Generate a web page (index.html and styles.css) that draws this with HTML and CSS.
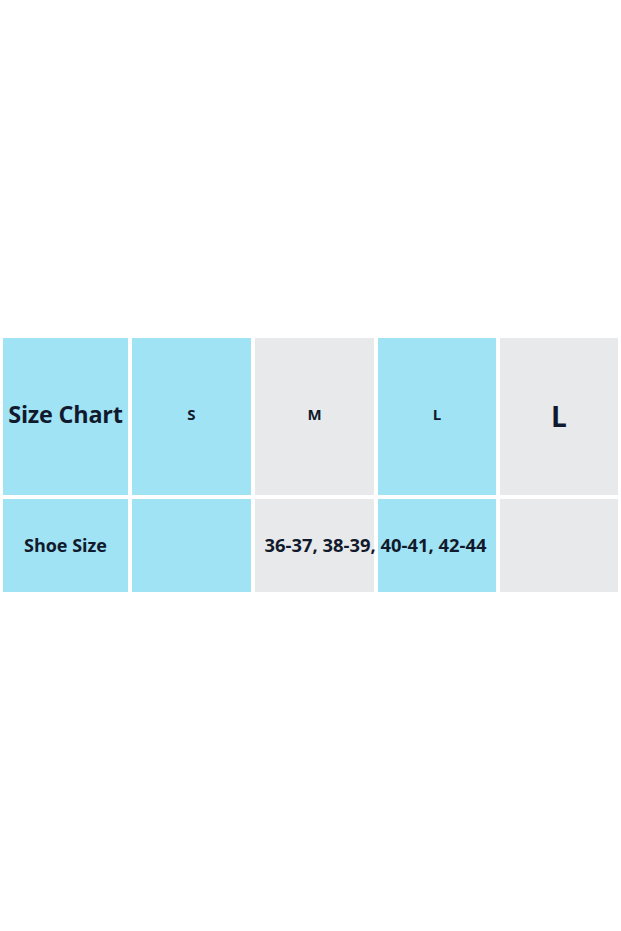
FILE: index.html
```html
<!DOCTYPE html>
<html>
<head>
<meta charset="utf-8">
<link rel="stylesheet" href="styles.css">
</head>
<body>
<div class="page">
  <div class="chart">
    <div class="cell blue head-title">Size Chart</div>
    <div class="cell blue size-sm">S</div>
    <div class="cell gray size-sm">M</div>
    <div class="cell blue size-sm">L</div>
    <div class="cell gray size-lg">L</div>

    <div class="cell blue row-label">Shoe Size</div>
    <div class="cell blue"></div>
    <div class="cell gray c3"></div>
    <div class="cell blue c4"></div>
    <div class="cell gray c5"></div>
    <div class="span-text">36-37, 38-39, 40-41, 42-44</div>
  </div>
</div>
</body>
</html>
```

FILE: styles.css
```css
html, body {
  margin: 0;
  padding: 0;
  background: #ffffff;
}
.page {
  width: 621px;
  height: 931px;
  padding-top: 338px;
  padding-left: 3px;
  box-sizing: border-box;
}
.chart {
  display: grid;
  grid-template-columns: 125px 119px 119px 118px 118px;
  grid-template-rows: 157px 93px;
  column-gap: 4px;
  row-gap: 4px;
  font-family: "Open Sans", "Noto Sans", sans-serif;
  font-weight: 700;
  color: #111a2c;
}
.cell {
  display: flex;
  align-items: center;
  justify-content: center;
}
.blue { background: #9fe3f5; }
.gray { background: #e8e9eb; }
.head-title {
  font-size: 23.4px;
  letter-spacing: -0.2px;
  padding-bottom: 5px;
}
.size-sm {
  font-size: 15px;
  padding-bottom: 5px;
}
.size-lg {
  font-size: 28px;
  padding-bottom: 2px;
}
.row-label {
  font-size: 18px;
  padding-bottom: 1px;
}
.c3 { grid-row: 2; grid-column: 3; }
.c4 { grid-row: 2; grid-column: 4; }
.c5 { grid-row: 2; grid-column: 5; }
.span-text {
  grid-row: 2;
  grid-column: 3 / 5;
  display: flex;
  align-items: center;
  justify-content: center;
  font-size: 18.4px;
  white-space: nowrap;
  padding-bottom: 3px;
  position: relative;
  z-index: 1;
}
```
